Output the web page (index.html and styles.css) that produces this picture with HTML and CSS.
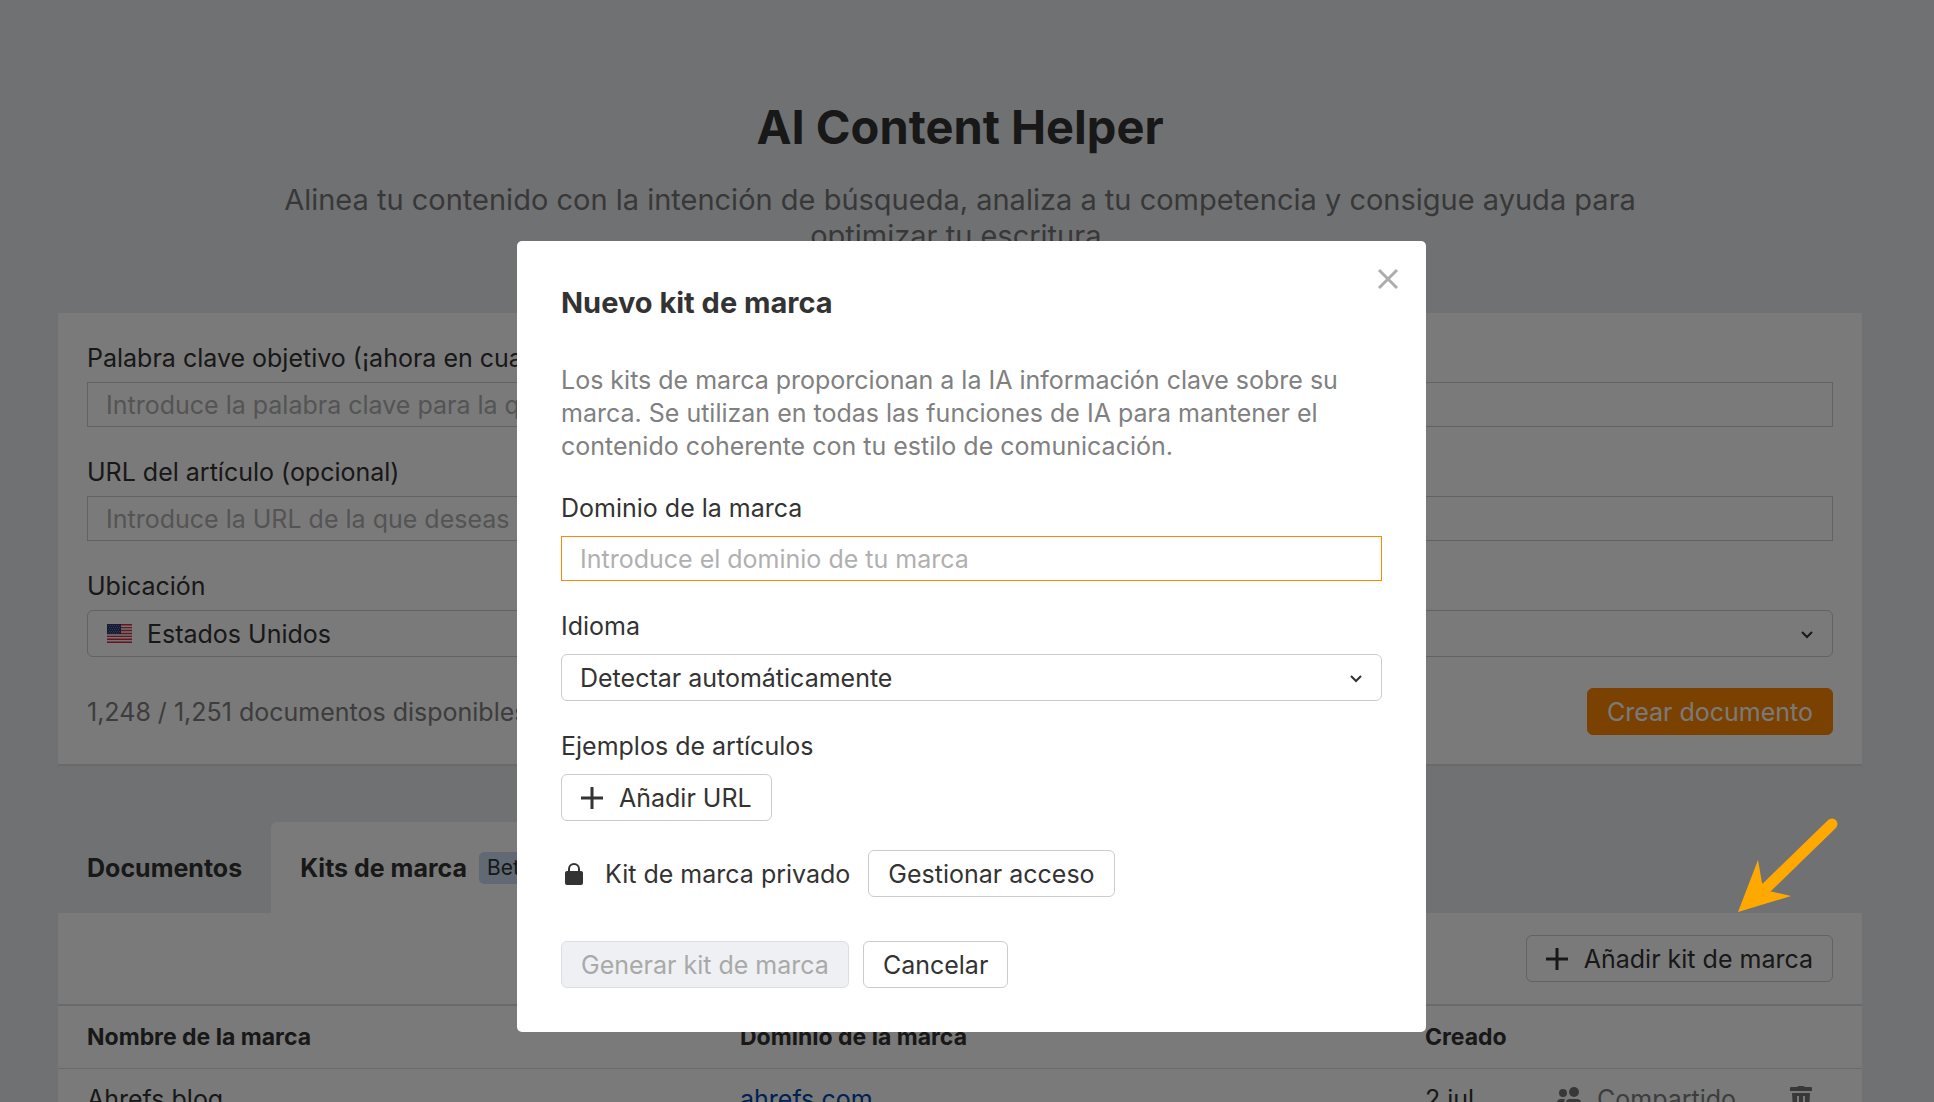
FILE: index.html
```html
<!DOCTYPE html>
<html lang="es">
<head>
  <meta charset="UTF-8" />
  <meta name="viewport" content="width=device-width, initial-scale=1" />
  <title>AI Content Helper</title>
  <link rel="stylesheet" href="styles.css">
</head>
<body>

  <main class="page">
    <header class="hero">
      <h1>AI Content Helper</h1>
      <p>Alinea tu contenido con la intención de búsqueda, analiza a tu competencia y consigue ayuda para optimizar tu escritura.</p>
    </header>

    <form class="card">
      <div class="field">
        <label for="keyword">Palabra clave objetivo (¡ahora en cualquier idioma!)</label>
        <input type="text" id="keyword" placeholder="Introduce la palabra clave para la que deseas posicionarte" />
      </div>
      <div class="field">
        <label for="articleUrl">URL del artículo (opcional)</label>
        <input type="text" id="articleUrl" placeholder="Introduce la URL de la que deseas importar el contenido" />
      </div>
      <div class="field">
        <label for="location">Ubicación</label>
        <div class="select select-flag">
          <svg class="flag" viewBox="0 0 25 19" width="25" height="19">
            <rect width="25" height="19" fill="#f5f5f5" />
            <path d="M0 .7h25M0 3.6h25M0 6.5h25M0 9.5h25M0 12.4h25M0 15.3h25M0 18.3h25" stroke="#d02f44" stroke-width="1.4" />
            <rect width="14" height="10" fill="#2b3a78" />
            <path d="M1 1.5h12M2 3.5h11M1 5.5h12M2 7.5h11M1 9h12" stroke="#6b76a8" stroke-width="1" stroke-dasharray="1 1" />
          </svg>
          <select id="location">
            <option>Estados Unidos</option>
          </select>
          <svg class="chevron" viewBox="0 0 14 10" width="14" height="10"><path d="M2 2l5 5 5-5" /></svg>
        </div>
      </div>
      <div class="card-footer">
        <span class="muted">1,248 / 1,251 documentos disponibles</span>
        <button type="button" class="btn btn-primary">Crear documento</button>
      </div>
    </form>

    <nav class="tabs">
      <a href="#documentos" class="tab">Documentos</a>
      <a href="#kits" class="tab active">Kits de marca <span class="badge">Beta</span></a>
    </nav>

    <section class="panel" id="kits">
      <div class="toolbar">
        <button type="button" class="btn btn-icon">
          <svg class="plus" viewBox="0 0 22 22" width="22" height="22"><path d="M11 0v22M0 11h22" /></svg>
          Añadir kit de marca
        </button>
      </div>
      <table>
        <thead>
          <tr>
            <th class="col-name">Nombre de la marca</th>
            <th class="col-domain">Dominio de la marca</th>
            <th class="col-date">Creado</th>
            <th class="col-share"></th>
            <th class="col-delete"></th>
          </tr>
        </thead>
        <tbody>
          <tr>
            <td>Ahrefs blog</td>
            <td><a href="#ahrefs">ahrefs.com</a></td>
            <td>2 jul</td>
            <td>
              <span class="shared">
                <svg viewBox="0 0 24 20" width="24" height="20" fill="#767676">
                  <circle cx="6" cy="4" r="4" />
                  <circle cx="17" cy="3" r="5" />
                  <path d="M0 18v-4q0-4 4-4h4q-1 2-1 5v3zM9 20v-6q0-4 4-4h7q4 0 4 4v6z" />
                </svg>
                Compartido
              </span>
            </td>
            <td>
              <button type="button" class="btn-trash" aria-label="Eliminar">
                <svg viewBox="0 0 22 26" width="22" height="26">
                  <path d="M1 1h6q1-1 2-1h4q1 0 2 1h6q1 0 1 1v3H0V2q0-1 1-1z" />
                  <path d="M2 7h18l-1 17q0 2-2 2H5q-2 0-2-2zM7 10v12h2V10zM13 10v12h2V10z" fill-rule="evenodd" />
                </svg>
              </button>
            </td>
          </tr>
        </tbody>
      </table>
    </section>
  </main>

  <div class="overlay">
    <div class="modal" role="dialog" aria-labelledby="modalTitle">
      <button type="button" class="btn-close" aria-label="Cerrar">
        <svg viewBox="0 0 22 22" width="22" height="22"><path d="M2 2l18 18M20 2L2 20" /></svg>
      </button>
      <h2 id="modalTitle">Nuevo kit de marca</h2>
      <p class="muted">Los kits de marca proporcionan a la IA información clave sobre su marca. Se utilizan en todas las funciones de IA para mantener el contenido coherente con tu estilo de comunicación.</p>

      <form>
        <div class="field">
          <label for="domain">Dominio de la marca</label>
          <input type="text" id="domain" class="focused" placeholder="Introduce el dominio de tu marca" />
        </div>
        <div class="field">
          <label for="language">Idioma</label>
          <div class="select">
            <select id="language">
              <option>Detectar automáticamente</option>
            </select>
            <svg class="chevron" viewBox="0 0 14 10" width="14" height="10"><path d="M2 2l5 5 5-5" /></svg>
          </div>
        </div>
        <div class="field">
          <label for="addUrl">Ejemplos de artículos</label>
          <button type="button" id="addUrl" class="btn btn-icon">
            <svg class="plus" viewBox="0 0 22 22" width="22" height="22"><path d="M11 0v22M0 11h22" /></svg>
            Añadir URL
          </button>
        </div>
        <div class="privacy">
          <svg class="lock" viewBox="0 0 18 22" width="18" height="22">
            <path d="M4 10V6a5 5 0 0 1 10 0v4" fill="none" stroke="#333" stroke-width="2" />
            <rect y="8" width="18" height="14" rx="2" fill="#333" />
          </svg>
          <span>Kit de marca privado</span>
          <button type="button" class="btn">Gestionar acceso</button>
        </div>
        <div class="actions">
          <button type="submit" class="btn" disabled>Generar kit de marca</button>
          <button type="button" class="btn">Cancelar</button>
        </div>
      </form>
    </div>
  </div>

  <svg class="pointer" viewBox="0 0 104 100" width="104" height="100">
    <path d="M96 8L26 76" stroke="#ffa800" stroke-width="11" stroke-linecap="round" />
    <path d="M2 96L22 44 26 67 33 75 55 80z" fill="#ffa800" />
  </svg>

</body>
</html>
```

FILE: styles.css
```css
* {
  box-sizing: border-box;
}
body {
  margin: 0;
  height: 100vh;
  overflow: hidden;
  font-family: Inter, "Liberation Sans", sans-serif;
  font-size: 25px;
  line-height: 32px;
  color: #333;
  background: #ebedf1;
}
h1, h2, p {
  margin: 0;
}
input, select, button {
  font: inherit;
  color: inherit;
}
.page {
  padding: 98px 72px 0 58px;
}
.hero {
  max-width: 1400px;
  height: 215px;
  margin: 0 auto;
  text-align: center;
}
.hero h1 {
  font-size: 47px;
  line-height: 58px;
  margin-bottom: 26px;
}
.hero p {
  font-size: 29px;
  line-height: 36px;
  color: #767676;
}
.muted {
  color: #808080;
}

/* Form fields */
.card {
  background: white;
  padding: 29px;
  border-bottom: 2px solid #dcdde0;
}
.field {
  margin-bottom: 29px;
}
.field label {
  display: block;
  margin-bottom: 8px;
}
.field input {
  display: block;
  width: 100%;
  height: 45px;
  padding: 0 18px;
  border: 1px solid #ccc;
  border-radius: 0;
  background: white;
  outline: none;
}
.field input.focused {
  border-color: #ff8800;
}
.field input::placeholder {
  color: #b0b0b0;
  opacity: 1;
}
.select {
  position: relative;
}
.select select {
  display: block;
  width: 100%;
  height: 47px;
  padding: 0 18px;
  border: 1px solid #ccc;
  border-radius: 6px;
  background: white;
  appearance: none;
}
.select-flag select {
  padding-left: 59px;
}
.flag {
  position: absolute;
  top: 14px;
  left: 20px;
}
.chevron {
  position: absolute;
  top: 20px;
  right: 19px;
  fill: none;
  stroke: #333;
  stroke-width: 2;
}
.card-footer {
  display: flex;
  align-items: center;
  justify-content: space-between;
  padding-top: 2px;
}

/* Buttons */
.btn {
  height: 47px;
  padding: 0 19px;
  border: 1px solid #ccc;
  border-radius: 6px;
  background: white;
  white-space: nowrap;
}
.btn-primary {
  border-color: #ff8800;
  background: #ff8800;
  color: white;
}
.btn:disabled {
  border-color: #dcdde0;
  background: #eff0f3;
  color: #a9a9a9;
}
.btn-icon {
  display: flex;
  align-items: center;
  gap: 16px;
}
.plus {
  fill: none;
  stroke: #333;
  stroke-width: 3;
}

/* Tabs and table */
.tabs {
  display: flex;
  margin-top: 56px;
}
.tab {
  display: flex;
  align-items: center;
  gap: 12px;
  height: 91px;
  padding: 0 29px;
  border-radius: 6px 6px 0 0;
  font-weight: bold;
  color: #333;
  text-decoration: none;
}
.tab.active {
  background: white;
}
.badge {
  padding: 0 8px;
  border-radius: 5px;
  background: #cbdcf5;
  font-size: 21px;
  font-weight: normal;
}
.panel {
  background: white;
}
.toolbar {
  display: flex;
  justify-content: flex-end;
  padding: 22px 29px;
  border-bottom: 2px solid #dcdde0;
}
table {
  width: 100%;
  table-layout: fixed;
  border-collapse: collapse;
}
th, td {
  height: 62px;
  padding: 0 0 0 29px;
  text-align: left;
  border-bottom: 1px solid #dcdde0;
}
th {
  font-size: 23px;
}
.col-name {
  width: 653px;
}
.col-domain {
  width: 685px;
}
.col-date {
  width: 132px;
}
.col-delete {
  width: 101px;
}
td a {
  color: #0045ad;
  text-decoration: none;
}
.shared {
  display: flex;
  align-items: center;
  gap: 16px;
  color: #808080;
}
.shared svg {
  overflow: visible;
}
.btn-trash {
  display: block;
  padding: 0;
  border: none;
  background: none;
}
.btn-trash svg {
  display: block;
  fill: #767676;
}

/* Modal */
.overlay {
  position: fixed;
  inset: 0;
  padding: 241px 0 0 9px;
  background: rgba(0, 0, 0, 0.52);
}
.modal {
  position: relative;
  max-width: 909px;
  margin: 0 auto;
  padding: 44px;
  border-radius: 5px;
  background: white;
}
.modal h2 {
  margin-bottom: 43px;
  font-size: 29px;
  line-height: 36px;
}
.modal p {
  margin-bottom: 29px;
  line-height: 33px;
}
.modal .field label {
  margin-bottom: 12px;
}
.btn-close {
  position: absolute;
  top: 27px;
  right: 27px;
  padding: 0;
  border: none;
  background: none;
}
.btn-close svg {
  display: block;
  fill: none;
  stroke: #adadad;
  stroke-width: 3;
}
.privacy {
  display: flex;
  align-items: center;
  margin-bottom: 44px;
}
.lock {
  margin: 0 22px 0 4px;
}
.privacy span {
  margin-right: 18px;
}
.actions {
  display: flex;
  gap: 14px;
}

/* Arrow over the "add kit" button */
.pointer {
  position: fixed;
  top: 816px;
  right: 94px;
}
```
